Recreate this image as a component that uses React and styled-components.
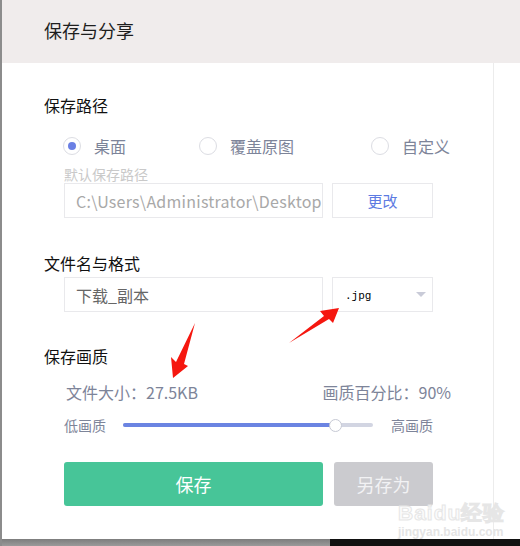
import React from "react";
import styled, { createGlobalStyle } from "styled-components";

const GlobalStyle = createGlobalStyle`
  html, body {
    margin: 0;
    padding: 0;
    background: #8c8c8c;
  }
  body {
    font-family: "Noto Sans CJK SC", "Noto Sans", sans-serif;
  }
`

const Page = styled.div`
  width: 520px;
  height: 546px;
  padding-left: 2px;
  box-sizing: border-box;
  display: flex;
  flex-direction: column;
  background: #8c8c8c;
  position: relative;
  overflow: hidden;
`

const Dialog = styled.div`
  display: flex;
  flex-direction: column;
  height: 539px;
  background: #fff;
`

const Header = styled.div`
  height: 63px;
  flex: none;
  box-sizing: border-box;
  display: flex;
  align-items: center;
  padding: 0 0 3px 42px;
  background: #f0ecec;
  font-size: 18px;
  color: #1e1e1e;
`

const BodyRow = styled.div`
  flex: 1;
  display: flex;
`

const Main = styled.div`
  width: 492px;
  border-right: 1px solid #ececec;
  padding: 31px 0 0 42px;
  box-sizing: border-box;
  display: flex;
  flex-direction: column;
`

const SectionTitle = styled.div`
  height: 22px;
  line-height: 22px;
  font-size: 16px;
  color: #111;
  margin-top: ${p => p.$top || 0}px;
`

const Indent = styled.div`
  padding-left: 20px;
  width: 369px;
  margin-top: ${p => p.$top || 0}px;
`

const RadioRow = styled(Indent)`
  display: flex;
  height: 24px;
  align-items: center;
  margin-left: -1px;
`

const RadioOption = styled.label`
  flex: none;
  display: flex;
  align-items: center;
  gap: 13px;
  width: ${p => p.$w}px;
  white-space: nowrap;
  font-size: 16px;
  color: #7d8499;
`

const RadioCircle = styled.span`
  width: 18px;
  height: 18px;
  box-sizing: border-box;
  border-radius: 50%;
  border: 1px solid #dcdde3;
  display: flex;
  align-items: center;
  justify-content: center;
  &::after {
    content: "";
    width: 8px;
    height: 8px;
    border-radius: 50%;
    background: ${p => (p.$on ? "#6b80e4" : "transparent")};
  }
`

const Hint = styled(Indent)`
  height: 17px;
  line-height: 17px;
  font-size: 14px;
  color: #c9c9c9;
`

const FieldRow = styled(Indent)`
  display: flex;
  gap: 9px;
  height: 35px;
`

const Field = styled.div`
  width: 259px;
  flex: none;
  box-sizing: border-box;
  border: 1px solid #e9e9ec;
  display: flex;
  align-items: center;
  padding-left: 11px;
  font-size: 16px;
  letter-spacing: ${p => (p.$path ? "0.25px" : "0")};
  color: ${p => (p.$path ? "#a8a8a8" : "#666")};
  white-space: nowrap;
  overflow: hidden;
`

const SideBox = styled.div`
  flex: 1;
  box-sizing: border-box;
  border: 1px solid #e9e9ec;
  display: flex;
  align-items: center;
  justify-content: ${p => (p.$select ? "space-between" : "center")};
  padding: ${p => (p.$select ? "0 6px 0 12px" : "0")};
  font-size: 15px;
  color: #5d7be2;
`

const ExtText = styled.span`
  font-family: "Liberation Mono", monospace;
  font-size: 11px;
  color: #000;
  margin-top: 2px;
`

const Caret = styled.span`
  width: 0;
  height: 0;
  border-left: 5px solid transparent;
  border-right: 5px solid transparent;
  border-top: 5px solid #c9cbd8;
`

const InfoRow = styled(Indent)`
  display: flex;
  justify-content: space-between;
  padding-left: 22px;
  width: 385px;
  height: 22px;
  line-height: 22px;
  font-size: 16px;
  color: #7d8499;
`

const SliderRow = styled(Indent)`
  display: flex;
  align-items: center;
  height: 20px;
  font-size: 14px;
  color: #7d8499;
`

const SliderTrack = styled.div`
  position: relative;
  width: 250px;
  height: 4px;
  margin: 0 18px 0 17px;
  border-radius: 2px;
  background: #d2d5e2;
`

const SliderFill = styled.div`
  height: 100%;
  border-radius: 2px;
  background: #6b84e2;
`

const SliderThumb = styled.div`
  position: absolute;
  top: 50%;
  width: 13px;
  height: 13px;
  box-sizing: border-box;
  margin: -6.5px 0 0 -6.5px;
  border-radius: 50%;
  background: #fff;
  border: 1px solid #c6c9d4;
`

const ButtonRow = styled(Indent)`
  display: flex;
  gap: 11px;
  height: 44px;
`

const Button = styled.button`
  border: none;
  border-radius: 3px;
  font-family: inherit;
  font-size: 18px;
  width: ${p => p.$w}px;
  background: ${p => (p.$primary ? "#47c598" : "#cbcbcf")};
  color: ${p => (p.$primary ? "#fff" : "#f2f2f4")};
`

const Bottom = styled.div`
  flex: 1;
  display: flex;
`

const BottomGray = styled.div`
  width: 328px;
  background: linear-gradient(#7d7d7d, #9a9a9a);
`

const BottomDark = styled.div`
  flex: 1;
  background: #111;
`

const Overlay = styled.svg`
  position: absolute;
  left: 0;
  top: 0;
  pointer-events: none;
`

const Watermark = styled.div`
  position: absolute;
  left: 398px;
  top: 502px;
  font-family: "Liberation Sans", sans-serif;
  line-height: 1;
  pointer-events: none;
`

const MarkBig = styled.div`
  font-size: 21px;
  font-weight: bold;
  letter-spacing: 1px;
  -webkit-text-stroke: 1px #e6e6e6;
  color: #fcfcfc;
`

const MarkSmall = styled.div`
  margin-top: 3px;
  font-size: 12px;
  font-weight: bold;
  color: #e4e4e4;
`

const radios = [
  { label: "桌面", w: 136, on: true },
  { label: "覆盖原图", w: 172 },
  { label: "自定义", w: 80 },
];

export default function App() {
  const quality = 85;

  return (
    <>
      <GlobalStyle />
      <Page>
        <Dialog>
          <Header>保存与分享</Header>
          <BodyRow>
            <Main>
              <SectionTitle>保存路径</SectionTitle>
              <RadioRow $top={18}>
                {radios.map(r => (
                  <RadioOption key={r.label} $w={r.w}>
                    <RadioCircle $on={r.on} />
                    {r.label}
                  </RadioOption>
                ))}
              </RadioRow>
              <Hint $top={8}>默认保存路径</Hint>
              <FieldRow>
                <Field $path>C:\Users\Administrator\Desktop</Field>
                <SideBox>更改</SideBox>
              </FieldRow>

              <SectionTitle $top={34}>文件名与格式</SectionTitle>
              <FieldRow $top={3}>
                <Field>下载_副本</Field>
                <SideBox $select>
                  <ExtText>.jpg</ExtText>
                  <Caret />
                </SideBox>
              </FieldRow>

              <SectionTitle $top={33}>保存画质</SectionTitle>
              <InfoRow $top={14}>
                <span>文件大小：27.5KB</span>
                <span>画质百分比：90%</span>
              </InfoRow>
              <SliderRow $top={12}>
                <span>低画质</span>
                <SliderTrack>
                  <SliderFill style={{ width: `${quality}%` }} />
                  <SliderThumb style={{ left: `${quality}%` }} />
                </SliderTrack>
                <span>高画质</span>
              </SliderRow>
              <ButtonRow $top={27}>
                <Button $primary $w={259}>保存</Button>
                <Button $w={99}>另存为</Button>
              </ButtonRow>
            </Main>
          </BodyRow>
        </Dialog>
        <Bottom>
          <BottomGray />
          <BottomDark />
        </Bottom>

        <Watermark>
          <MarkBig>Baidu经验</MarkBig>
          <MarkSmall>jingyan.baidu.com</MarkSmall>
        </Watermark>

        <Overlay width="520" height="546" viewBox="0 0 520 546">
          <polygon fill="#f5170f" points="195,323 184,364 188,366 173,378 171,357 176,362" />
          <polygon fill="#f5170f" points="289,343 324,316 320,311 339,308 333,323 329,319" />
        </Overlay>
      </Page>
    </>
  );
}
